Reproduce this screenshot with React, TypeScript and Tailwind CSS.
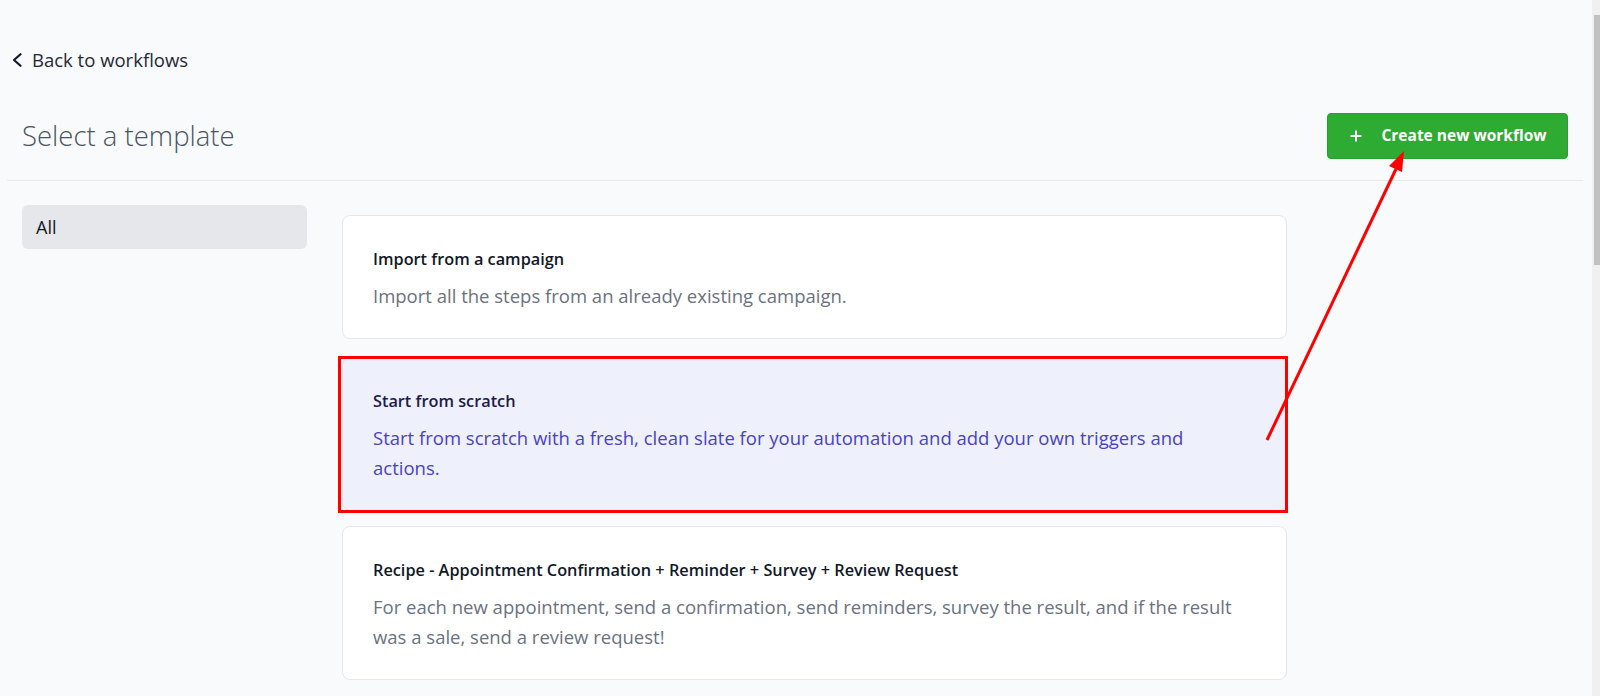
import { Plus } from "lucide-react";

interface Template {
  title: string;
  description: string;
  selected?: boolean;
}

const templates: Template[] = [
  {
    title: "Import from a campaign",
    description: "Import all the steps from an already existing campaign.",
  },
  {
    title: "Start from scratch",
    description:
      "Start from scratch with a fresh, clean slate for your automation and add your own triggers and actions.",
    selected: true,
  },
  {
    title: "Recipe - Appointment Confirmation + Reminder + Survey + Review Request",
    description:
      "For each new appointment, send a confirmation, send reminders, survey the result, and if the result was a sale, send a review request!",
  },
  {
    title: "Recipe - Missed Call Text Back",
    description: "Automatically text back anyone whose call you missed.",
  },
];

function TemplateCard({ t }: { t: Template }) {
  return (
    <div className={`relative ${t.selected ? "mt-[2px] mb-[-1px]" : ""}`}>
      <div
        className={`rounded-lg border px-[30px] pt-[31px] pb-[27px] ${
          t.selected
            ? "border-[#e0e4f5] bg-[#eef1fc]"
            : "border-[#e5e7eb] bg-white"
        }`}
      >
        <p
          className={`text-[16.3px] leading-[24px] font-semibold ${
            t.selected ? "text-[#1e1b4b]" : "text-[#111827]"
          }`}
        >
          {t.title}
        </p>
        <p
          className={`mt-[10px] max-w-[872px] text-[18.5px] leading-[30px] ${
            t.selected ? "text-[#4a42c4]" : "text-[#6b7280]"
          }`}
        >
          {t.description}
        </p>
      </div>
      {t.selected ? (
        <div className="pointer-events-none absolute -left-[4px] -right-[1px] -top-[1px] -bottom-[2px] border-[3px] border-[#ff0000]" />
      ) : null}
    </div>
  );
}

export default function App() {
  return (
    <div
      className="relative flex h-[696px] w-full overflow-hidden bg-[#f9fafb]"
      style={{ fontFamily: '"Open Sans", "Noto Sans", sans-serif' }}
    >
      <div className="flex-1">
        <a className="mt-[47px] flex items-center gap-[10px] pl-[12px] text-[18.5px] leading-[26px] text-[#1f2937]">
          <svg width="10" height="14" viewBox="0 0 10 14" fill="none">
            <polyline
              points="8.5,1.2 2,7 8.5,12.8"
              stroke="#111827"
              strokeWidth="2.2"
              strokeLinecap="round"
              strokeLinejoin="round"
            />
          </svg>
          Back to workflows
        </a>

        <div className="mt-[40px] ml-[7px] mr-[9px] flex items-center justify-between border-b border-[#e8e9ec] pb-[21px] pl-[15px] pr-[15px]">
          <h1 className="text-[27.5px] font-light text-[#4b5563]">Select a template</h1>
          <button className="flex h-[46px] w-[241px] items-center justify-center gap-[17px] rounded-[4px] border border-[#2a9e2f] bg-[#2eab33] text-[15.5px] font-bold text-white">
            <Plus className="h-[16px] w-[16px]" strokeWidth={3} />
            Create new workflow
          </button>
        </div>

        <div className="mt-[24px] flex gap-[35px] pl-[22px]">
          <div className="w-[285px]">
            <div className="flex h-[44px] items-center rounded-md bg-[#e5e7eb] px-[14px] text-[18px] text-[#111827]">
              All
            </div>
          </div>
          <div className="mt-[10px] flex w-[945px] flex-col gap-4">
            {templates.map((t) => (
              <TemplateCard key={t.title} t={t} />
            ))}
          </div>
        </div>
      </div>

      <div className="w-[8px] bg-[#f0f0f0] pt-[15px] pl-[2px]">
        <div className="h-[250px] bg-[#c1c1c1]" />
      </div>

      <svg
        className="pointer-events-none absolute inset-0"
        width="1600"
        height="696"
        viewBox="0 0 1600 696"
      >
        <line x1="1267" y1="440" x2="1396" y2="169" stroke="#ff0000" strokeWidth="3" />
        <polygon points="1404,151 1389,166 1402,172" fill="#ff0000" />
      </svg>
    </div>
  );
}
